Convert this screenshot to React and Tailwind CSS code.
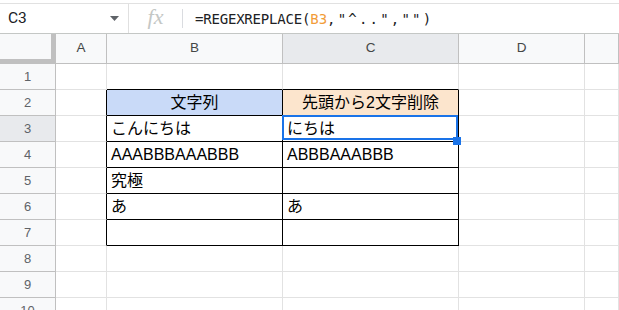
const cols = [
  { key: "A", w: "w-[51px]", label: "A" },
  { key: "B", w: "w-[176px]", label: "B" },
  { key: "C", w: "w-[176px]", label: "C" },
  { key: "D", w: "w-[126px]", label: "D" },
  { key: "E", w: "flex-1", label: "" },
];

const data = {
  2: { B: "文字列", C: "先頭から2文字削除" },
  3: { B: "こんにちは", C: "にちは" },
  4: { B: "AAABBBAAABBB", C: "ABBBAAABBB" },
  5: { B: "究極" },
  6: { B: "あ", C: "あ" },
};

const rows = [1, 2, 3, 4, 5, 6, 7, 8, 9, 10];
const inTable = (r) => r >= 2 && r <= 7;

const cellClass = (r, c) => {
  const rightBlack = inTable(r) && (c === "A" || c === "B" || c === "C");
  const bottomBlack = (c === "B" || c === "C") && r >= 1 && r <= 7;
  let bg = "bg-white";
  if (r === 2 && c === "B") bg = "bg-[#c9daf8]";
  if (r === 2 && c === "C") bg = "bg-[#fce5cd]";
  return [
    "h-[26px] shrink-0 border-r border-b flex items-center overflow-hidden whitespace-nowrap",
    rightBlack ? "border-r-black" : "border-r-[#e2e2e2]",
    bottomBlack ? "border-b-black" : "border-b-[#e2e2e2]",
    r === 2 ? "justify-center" : "pl-[4px]",
    bg,
  ].join(" ");
};

function FormulaBar() {
  return (
    <div className="flex h-[30px] items-stretch border-b border-[#c4c7c5] bg-white">
      <div className="flex w-[128px] items-center pl-[8px]">
        <span className="text-[15.5px] text-[#202124] font-['Roboto',sans-serif]">C3</span>
        <svg className="ml-auto mr-[9px]" width="9" height="5" viewBox="0 0 9 5">
          <path d="M0 0h9L4.5 5z" fill="#5f6368" />
        </svg>
      </div>
      <div className="w-px bg-[#e0e0e0]" />
      <div className="flex w-[53px] items-center justify-center pb-[4px]">
        <span className="text-[22px] italic leading-none text-[#c4c7c5] font-['Liberation_Serif',serif]">fx</span>
      </div>
      <div className="my-[5px] w-px bg-[#dadce0]" />
      <div className="ml-[12px] flex items-center pt-[1px] text-[14px] text-[#202124] font-['DejaVu_Sans_Mono',monospace]">
        <span className="tracking-[-0.2px]">=REGEXREPLACE(</span>
        <span className="text-[#f29c38]">B3</span>
        <span className="tracking-[2.2px]">,"^..",""</span>
        <span>)</span>
      </div>
    </div>
  );
}

export default function App() {
  return (
    <div className="h-[310px] w-[619px] overflow-hidden bg-white font-['Liberation_Sans','Noto_Sans_CJK_JP',sans-serif]">
      <div className="h-[4px] border-b border-[#e1e1e1]" />
      <FormulaBar />
      <div className="relative">
        <div className="flex">
          <div className="h-[30px] w-[56px] shrink-0 border-r border-b border-[#c0c0c0] bg-[#f8f9fa]">
            <div className="h-[29px] w-[55px] border-r-4 border-b-4 border-[#c0c0c0] bg-[#f8f9fa]" />
          </div>
          {cols.map((c) => (
            <div
              key={c.key}
              className={`${c.w} ${c.key === "C" ? "bg-[#e8eaed]" : "bg-[#f8f9fa]"} flex h-[30px] shrink-0 items-center justify-center border-r border-b border-[#c0c0c0] text-[13.5px] text-[#444746]`}
            >
              {c.label}
            </div>
          ))}
        </div>
        {rows.map((r) => (
          <div key={r} className="flex">
            <div
              className={`${r === 3 ? "bg-[#e8eaed]" : "bg-[#f8f9fa]"} flex h-[26px] w-[56px] shrink-0 items-center justify-center border-r border-b border-[#c0c0c0] text-[13px] text-[#5f6368]`}
            >
              {r}
            </div>
            {cols.map((c) => (
              <div key={c.key} className={`${c.w} ${cellClass(r, c.key)} text-[16px] text-black`}>
                {data[r] && data[r][c.key]}
              </div>
            ))}
          </div>
        ))}
        <div className="absolute left-[282px] top-[81px] h-[25px] w-[176px] border-2 border-[#1a73e8]" />
        <div className="absolute left-[453px] top-[103px] h-[8px] w-[8px] bg-[#1a73e8]" />
      </div>
    </div>
  );
}
